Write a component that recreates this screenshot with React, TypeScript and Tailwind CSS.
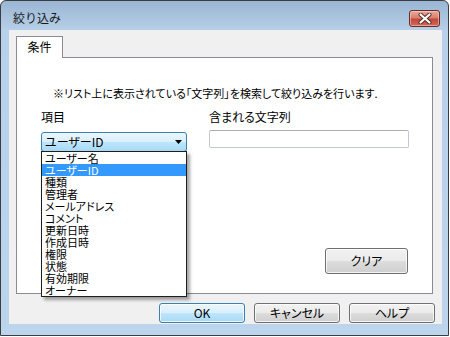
import React from "react"

const items = [
    "ユーザー名",
    "ユーザーID",
    "種類",
    "管理者",
    "メールアドレス",
    "コメント",
    "更新日時",
    "作成日時",
    "権限",
    "状態",
    "有効期限",
    "オーナー",
]

function WinButton({ label, isDefault = false, className = "" }: { label: string; isDefault?: boolean; className?: string }) {
    return (
        <div
            className={`flex items-center justify-center rounded-[3px] border text-[12px] leading-[14px] text-black shadow-[inset_0_0_0_1px_rgba(255,255,255,0.75)] ${
                isDefault
                    ? "border-[#3c7fb1] bg-[linear-gradient(to_bottom,#eaf6fd_0%,#d9f0fc_50%,#bee6fd_50%,#a7d9f5_100%)]"
                    : "border-[#707070] bg-[linear-gradient(to_bottom,#f2f2f2_0%,#ebebeb_50%,#dddddd_50%,#cfcfcf_100%)]"
            } ${className}`}
        >
            {label}
        </div>
    )
}

function CloseButton() {
    return (
        <div className="flex h-[17px] w-[31px] items-center justify-center rounded-[3px] border border-[#6b2a22] bg-[linear-gradient(to_bottom,#e9a99b_0%,#d9806e_45%,#c4473a_55%,#cf6a58_100%)] shadow-[inset_0_0_0_1px_rgba(255,220,210,0.5)]">
            <svg width="14" height="11" viewBox="0 0 14 11">
                <path d="M2.5 1.5 L11.5 9.5 M11.5 1.5 L2.5 9.5" stroke="#4a2a26" strokeWidth="4" strokeLinecap="round" />
                <path d="M2.5 1.5 L11.5 9.5 M11.5 1.5 L2.5 9.5" stroke="#ffffff" strokeWidth="2.2" strokeLinecap="round" />
            </svg>
        </div>
    )
}

export default function App() {
    return (
        <div className="h-[337px] w-[450px] bg-white font-['Noto_Sans_CJK_JP',sans-serif] [font-feature-settings:'palt']">
            <div className="flex h-[336px] w-[449px] flex-col rounded-t-[6px] border border-[#3a3d42] bg-[linear-gradient(to_bottom,#9ab6d3_0px,#b8d0e9_30px,#bcd4ec_100%)]">
                {/* title bar */}
                <div className="flex h-[29px] shrink-0 items-start justify-between pl-[12px] pr-[8px]">
                    <span className="mt-[10px] text-[12px] leading-[14px] text-[#1a1a1a] [font-feature-settings:normal]">絞り込み</span>
                    <div className="mt-[9px]">
                        <CloseButton />
                    </div>
                </div>

                {/* client area */}
                <div className="ml-[8px] mr-[6px] flex h-[294px] flex-col bg-[#f0f0f0] pl-[7px] pr-[9px] pt-[6px]">
                    <div className="relative z-10 -mb-px flex h-[22px] w-[47px] items-start justify-center border border-b-0 border-[#898c95] bg-white pt-[3px] text-[12px] leading-[14px] text-black">
                        条件
                    </div>
                    <div className="h-[237px] border border-[#898c95] bg-white pl-[24px] pt-[28px]">
                        <p className="ml-[12px] text-[11px] leading-[14px] text-black">
                            ※リスト上に表示されている「文字列」を検索して絞り込みを行います.
                        </p>
                        <div className="mt-[10px] flex gap-[22px]">
                            <div className="relative w-[146px]">
                                <div className="text-[12px] leading-[14px] text-black">項目</div>
                                <div className="mt-[8px] flex h-[20px] items-center justify-between rounded-[3px] border border-[#3c7fb1] bg-[linear-gradient(to_bottom,#eaf6fd_0%,#d9f0fc_50%,#bee6fd_50%,#a7d9f5_100%)] pl-[3px] pr-[4px] text-[12px] leading-[14px] text-black">
                                    <span>ユーザーID</span>
                                    <svg width="7" height="4" viewBox="0 0 7 4">
                                        <path d="M0 0 H7 L3.5 4 Z" fill="#000" />
                                    </svg>
                                </div>
                                <div className="absolute left-0 top-[41px] z-20 w-[146px] border border-[#1e1e1e] bg-white shadow-[3px_3px_3px_rgba(0,0,0,0.35)]">
                                    {items.map((item, i) => (
                                        <div
                                            key={item}
                                            className={`h-[12px] pl-[3px] text-[11px] leading-[12px] ${
                                                i === 1 ? "bg-[#3399ff] text-white" : "text-black"
                                            }`}
                                        >
                                            {item}
                                        </div>
                                    ))}
                                </div>
                            </div>
                            <div className="flex w-[200px] flex-col">
                                <div className="text-[12px] leading-[14px] text-black">含まれる文字列</div>
                                <div className="mt-[6px] h-[18px] rounded-[2px] border border-[#c3c7ce] border-t-[#abadb3] bg-white" />
                                <WinButton label="クリア" className="mr-px mt-[100px] h-[26px] w-[83px] self-end" />
                            </div>
                        </div>
                    </div>
                    <div className="-mr-[2px] mt-[9px] flex justify-end gap-[9px]">
                        <WinButton label="OK" isDefault className="h-[20px] w-[86px]" />
                        <WinButton label="キャンセル" className="h-[20px] w-[86px]" />
                        <WinButton label="ヘルプ" className="h-[20px] w-[86px]" />
                    </div>
                </div>
            </div>
        </div>
    )
}
